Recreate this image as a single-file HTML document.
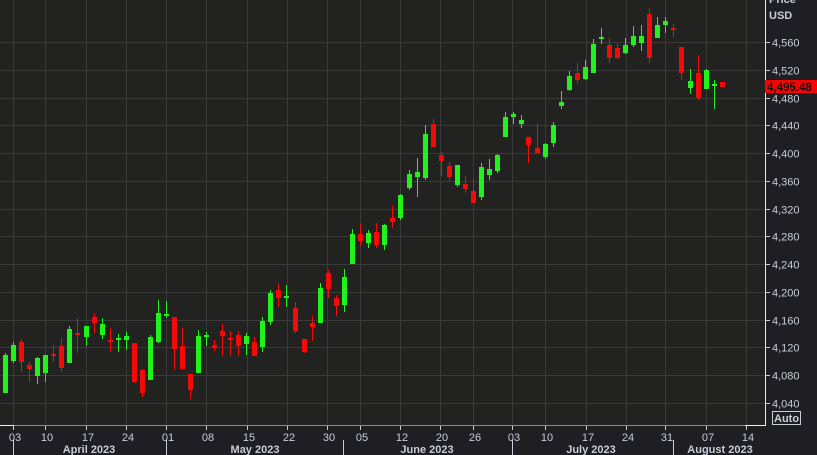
<!DOCTYPE html>
<html><head><meta charset="utf-8">
<style>
html,body{margin:0;padding:0;background:#1f1f23;overflow:hidden}
svg{display:block}
text{font-family:"Liberation Sans","DejaVu Sans",sans-serif}
</style></head><body>
<svg id="c" width="817" height="455" xmlns="http://www.w3.org/2000/svg">
<rect x="0" y="0" width="817" height="455" fill="#1f1f23"/>
<rect x="0" y="0" width="765" height="425" fill="#222320"/>
<g id="grid" stroke="#3a3b38" stroke-width="1"></g>
<g id="candles"></g>
<line x1="765.5" y1="0" x2="765.5" y2="426" stroke="#e8e8e8"/>
<line x1="0" y1="425.5" x2="765" y2="425.5" stroke="#8a8a8a"/>
<line x1="0" y1="425.5" x2="14" y2="425.5" stroke="#f0f0f0"/>
<line x1="745" y1="425.5" x2="766" y2="425.5" stroke="#f0f0f0"/>
<g id="axis" fill="#c9cdd6" font-size="11"></g>
<text x="769" y="3" fill="#c9cdd6" font-size="11" font-weight="bold">Price</text>
<text x="769" y="19" fill="#c9cdd6" font-size="11" font-weight="bold">USD</text>
<rect x="765" y="80" width="52" height="13" fill="#ff0000"/>
<text x="767" y="91" fill="#111" font-size="11.5" font-weight="bold">4,495.48</text>
<rect x="772.5" y="411.5" width="28" height="13" fill="none" stroke="#c9cdd6"/>
<text x="774" y="422" fill="#c9cdd6" font-size="11" font-weight="bold">Auto</text>
</svg>
<script>
var NS="http://www.w3.org/2000/svg";
function el(p,t,a,txt){var e=document.createElementNS(NS,t);for(var k in a)e.setAttribute(k,a[k]);if(txt)e.textContent=txt;document.getElementById(p).appendChild(e);return e;}
var prices=[4560,4520,4480,4440,4400,4360,4320,4280,4240,4200,4160,4120,4080,4040];
prices.forEach(function(p){var y=Math.round(42+(4560-p)*0.694)+0.5;
 el("grid","line",{x1:0,y1:y,x2:765,y2:y});
 el("axis","line",{x1:766,y1:y,x2:770,y2:y,stroke:"#c9cdd6"});
 el("axis","text",{x:772,y:y+4},p.toLocaleString("en-US"));});
var dates=[[13,"03"],[45,"10"],[86,"17"],[126,"24"],[166,"01"],[206,"08"],[247,"15"],[287,"22"],[327,"30"],[360,"05"],[400,"12"],[440,"20"],[473,"26"],[512,"03"],[545,"10"],[586,"17"],[626,"24"],[665,"31"],[706,"07"],[746,"14"]];
dates.forEach(function(d){var x=d[0]+0.5;
 if(d[0]<765)el("grid","line",{x1:x,y1:0,x2:x,y2:425});
 el("axis","line",{x1:x,y1:426,x2:x,y2:430,stroke:"#c9cdd6"});
 el("axis","text",{x:d[0]+2,y:441,"text-anchor":"middle"},d[1]);});
[13,166,343,512,673].forEach(function(x){el("axis","line",{x1:x+.5,y1:440,x2:x+.5,y2:455,stroke:"#c9cdd6"});});
[[89,"April 2023"],[255,"May 2023"],[427,"June 2023"],[591,"July 2023"],[720,"August 2023"]].forEach(function(m){
 el("axis","text",{x:m[0],y:453,"text-anchor":"middle","font-weight":"bold"},m[1]);});
// x, color, bodyTop, bodyBot, wickTop, wickBot
var C=[
[5,"g",355,393,353,393],[13,"g",345,361,342,363],[21,"r",342,362,339,372],[29,"r",365,369,362,382],[37,"g",358,376,357,384],[45,"g",355,373,355,382],[53,"r",354,356,345,362],[61,"r",346,368,338,372],[69,"g",329,363,326,363],[77,"r",333,335,318,353],[86,"g",326,337,326,346],[94,"r",317,323,313,333],[102,"g",324,335,318,339],[110,"r",340,342,328,352],[118,"g",338,340,334,352],[126,"g",336,340,332,350],[134,"r",343,382,343,383],[142,"r",370,393,369,397],[150,"g",337,380,335,380],[158,"g",313,342,300,343],[166,"g",314,316,301,318],[174,"r",317,349,317,370],[182,"r",346,369,328,370],[190,"r",374,390,374,399],[198,"g",336,373,330,373],
[206,"g",335,337,332,346],[214,"r",345,348,340,351],[222,"r",331,336,324,356],[230,"r",338,340,331,356],[238,"r",335,346,331,356],[246,"g",336,344,333,355],[254,"r",342,356,337,356],[262,"g",321,347,317,352],[270,"g",293,322,290,325],[278,"r",290,298,283,307],[286,"g",296,298,285,307],[295,"r",308,331,302,333],[304,"r",339,352,339,353],[312,"r",323,327,316,341],[320,"g",288,323,283,323],[328,"r",273,289,270,298],[336,"r",298,306,295,316],[344,"g",277,305,269,312],[352,"g",234,264,229,264],[360,"r",234,241,223,246],[368,"g",233,243,230,248],[376,"r",232,245,223,248],[384,"g",225,245,224,250],
[392,"r",218,222,206,228],[400,"g",195,218,194,220],[409,"g",174,188,170,190],[417,"g",172,177,158,197],[425,"g",134,178,125,180],[433,"r",124,147,119,147],[441,"r",155,161,152,176],[449,"r",166,177,162,181],[457,"g",165,185,165,187],[465,"r",184,189,176,193],[473,"r",191,203,179,203],[481,"g",167,197,163,200],[489,"g",169,175,159,180],[497,"g",155,171,154,173],[505,"g",117,137,112,137],[513,"g",114,117,112,124],[521,"g",120,124,115,128],[528,"r",137,145,137,163],[537,"r",148,153,124,153],[545,"g",144,157,143,159],[553,"g",125,143,122,147],
[561,"g",102,106,91,109],[569,"g",76,90,71,91],[577,"r",73,80,63,84],[585,"g",67,79,60,80],[593,"g",44,73,39,73],[601,"g",37,39,28,44],[609,"r",45,58,38,63],[617,"r",48,58,44,59],[625,"g",45,53,38,54],[633,"g",36,45,26,47],[641,"g",36,43,25,51],[649,"r",14,58,8,63],[657,"g",25,38,17,38],[665,"g",21,25,17,33],[673,"r",28,30,24,37],[681,"r",47,73,47,80],[690,"g",81,88,69,94],[698,"r",73,98,55,100],[706,"g",70,89,69,89],[714,"g",84,85,80,109],[722,"r",82,87,82,87]];
C.forEach(function(c){var col=c[1]=="g"?"#22f21c":"#f50a0a";
 el("candles","rect",{x:c[0],y:c[4],width:1,height:c[5]-c[4],fill:col});
 var h=Math.max(2,c[3]-c[2]);
 el("candles","rect",{x:c[0]-2,y:c[2],width:5,height:h,fill:col});});
</script>
</body></html>
